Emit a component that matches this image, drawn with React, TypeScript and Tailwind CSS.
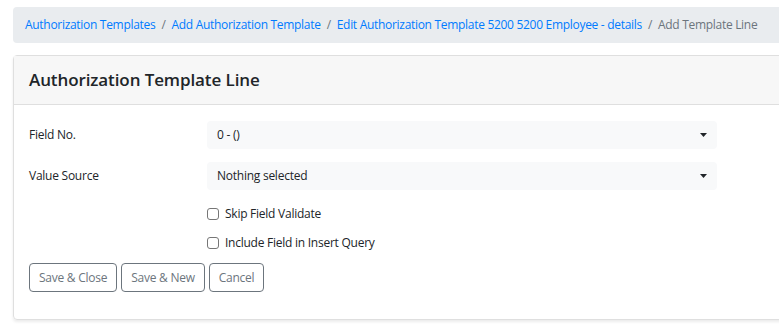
const crumbs = [
  "Authorization Templates",
  "Add Authorization Template",
  "Edit Authorization Template 5200 5200 Employee - details",
];

const Caret = () => (
  <svg width="7" height="4" viewBox="0 0 7 4" className="text-[#212529]">
    <path d="M0 0h7L3.5 4z" fill="currentColor" />
  </svg>
);

const SelectBox = ({ value }: { value: string }) => (
  <div className="flex h-[28px] w-[510px] items-center justify-between rounded-[4px] bg-[#f8f9fa] pl-[10px] pr-[10px] text-[#212529]">
    <span>{value}</span>
    <Caret />
  </div>
);

const Check = ({ label }: { label: string }) => (
  <label className="flex h-[18px] items-center gap-[6px] text-[#212529]">
    <span className="h-[12px] w-[12px] rounded-[3px] border border-[#767676] bg-white" />
    {label}
  </label>
);

const Btn = ({ children }: { children: string }) => (
  <button className="h-[29px] rounded-[4px] border border-[#6c757d] bg-white px-[9px] text-[#6c757d]">
    {children}
  </button>
);

export default function App() {
  return (
    <div
      className="h-[329px] w-[779px] overflow-hidden bg-white text-[12px] tracking-[-0.25px]"
      style={{ fontFamily: '"Segoe UI", "Open Sans", sans-serif' }}
    >
      <div className="ml-[13px] w-[800px] pt-[7px]">
        <nav className="flex h-[36px] items-center whitespace-nowrap rounded-[4px] bg-[#e9ecef] px-[12px] tracking-[-0.3px]">
          {crumbs.map((c) => (
            <span key={c} className="flex shrink-0 items-center">
              <a className="text-[#007bff]">{c}</a>
              <span className="px-[6px] text-[#6c757d]">/</span>
            </span>
          ))}
          <span className="shrink-0 text-[#6c757d]">Add Template Line</span>
        </nav>

        <div className="mt-[12px] rounded-[4px] border border-[#dfdfdf] shadow-[0_2px_3px_rgba(0,0,0,0.08)]">
          <div className="flex h-[49px] items-center border-b border-[#dfdfdf] bg-[#f7f7f7] px-[15px]">
            <h3 className="text-[17px] font-semibold tracking-[-0.1px] text-[#212529]">
              Authorization Template Line
            </h3>
          </div>
          <div className="flex flex-col px-[15px] pb-[27px] pt-[16px]">
            <div className="flex items-center">
              <span className="w-[178px] text-[#212529]">Field No.</span>
              <SelectBox value="0 - ()" />
            </div>
            <div className="mt-[13px] flex items-center">
              <span className="w-[178px] text-[#212529]">Value Source</span>
              <SelectBox value="Nothing selected" />
            </div>
            <div className="ml-[178px] mt-[15px] flex flex-col gap-[11px]">
              <Check label="Skip Field Validate" />
              <Check label="Include Field in Insert Query" />
            </div>
            <div className="mt-[11px] flex gap-[4px]">
              <Btn>Save &amp; Close</Btn>
              <Btn>Save &amp; New</Btn>
              <Btn>Cancel</Btn>
            </div>
          </div>
        </div>
      </div>
    </div>
  );
}
